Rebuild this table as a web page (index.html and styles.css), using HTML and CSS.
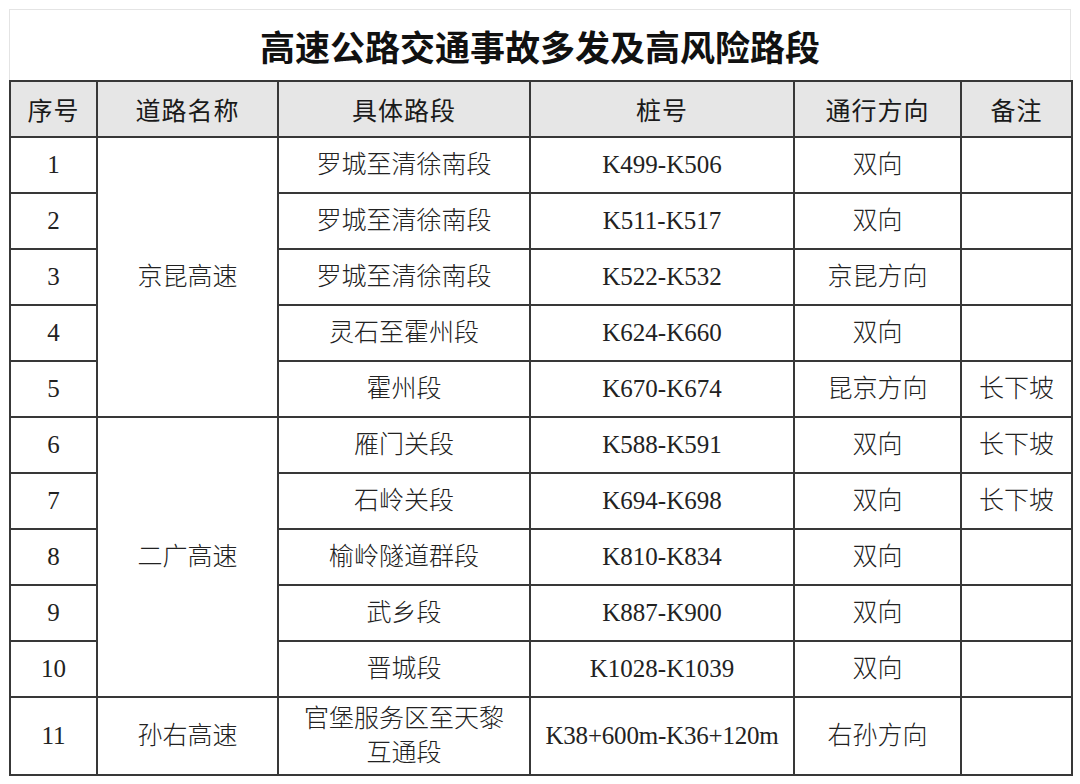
FILE: index.html
```html
<!DOCTYPE html>
<html lang="zh-CN">
<head>
<meta charset="utf-8">
<title>高速公路交通事故多发及高风险路段</title>
<link rel="stylesheet" href="styles.css">
</head>
<body>
<div class="sheet">
  <div class="title">高速公路交通事故多发及高风险路段</div>
  <table class="grid">
    <colgroup>
      <col class="c1"><col class="c2"><col class="c3"><col class="c4"><col class="c5"><col class="c6">
    </colgroup>
    <thead>
      <tr><th>序号</th><th>道路名称</th><th>具体路段</th><th>桩号</th><th>通行方向</th><th>备注</th></tr>
    </thead>
    <tbody>
      <tr><td>1</td><td rowspan="5">京昆高速</td><td>罗城至清徐南段</td><td class="k">K499-K506</td><td>双向</td><td></td></tr>
      <tr><td>2</td><td>罗城至清徐南段</td><td class="k">K511-K517</td><td>双向</td><td></td></tr>
      <tr><td>3</td><td>罗城至清徐南段</td><td class="k">K522-K532</td><td>京昆方向</td><td></td></tr>
      <tr><td>4</td><td>灵石至霍州段</td><td class="k">K624-K660</td><td>双向</td><td></td></tr>
      <tr><td>5</td><td>霍州段</td><td class="k">K670-K674</td><td>昆京方向</td><td>长下坡</td></tr>
      <tr><td>6</td><td rowspan="5">二广高速</td><td>雁门关段</td><td class="k">K588-K591</td><td>双向</td><td>长下坡</td></tr>
      <tr><td>7</td><td>石岭关段</td><td class="k">K694-K698</td><td>双向</td><td>长下坡</td></tr>
      <tr><td>8</td><td>榆岭隧道群段</td><td class="k">K810-K834</td><td>双向</td><td></td></tr>
      <tr><td>9</td><td>武乡段</td><td class="k">K887-K900</td><td>双向</td><td></td></tr>
      <tr><td>10</td><td>晋城段</td><td class="k">K1028-K1039</td><td>双向</td><td></td></tr>
      <tr class="tall"><td>11</td><td>孙右高速</td><td class="two">官堡服务区至天黎<br>互通段</td><td class="k long">K38+600m-K36+120m</td><td>右孙方向</td><td></td></tr>
    </tbody>
  </table>
</div>
</body>
</html>
```
FILE: styles.css
```css
html, body {
  margin: 0;
  padding: 0;
  background: #ffffff;
}

.sheet {
  padding: 9px 9px 0 9px;
  width: 1062px;
}

.title {
  height: 70px;
  border: 1px solid #e4e4e4;
  border-bottom: none;
  display: flex;
  align-items: center;
  justify-content: center;
  font-family: "Liberation Serif", "Noto Sans CJK SC", serif;
  font-weight: 700;
  font-size: 35px;
  color: #111111;
}

.grid {
  border-collapse: collapse;
  table-layout: fixed;
  width: 1062px;
  color: #222222;
}

.c1 { width: 87px; }
.c2 { width: 181px; }
.c3 { width: 252px; }
.c4 { width: 264px; }
.c5 { width: 167px; }
.c6 { width: 111px; }

.grid th,
.grid td {
  border: 2px solid #383838;
  text-align: center;
  vertical-align: middle;
  padding: 0;
  height: 54px;
}

.grid th {
  background: #e6e6e6;
  font-family: "Noto Sans CJK SC", sans-serif;
  font-weight: 400;
  font-size: 25px;
  color: #1a1a1a;
  letter-spacing: 1px;
}

.grid td {
  font-family: "Liberation Serif", "Noto Sans CJK SC", serif;
  font-weight: 300;
  font-size: 25px;
  line-height: 28px;
}

.grid td.long {
  letter-spacing: -0.2px;
}

.grid td.two {
  line-height: 34px;
}

.grid tr.tall td {
  height: 76px;
}
```
